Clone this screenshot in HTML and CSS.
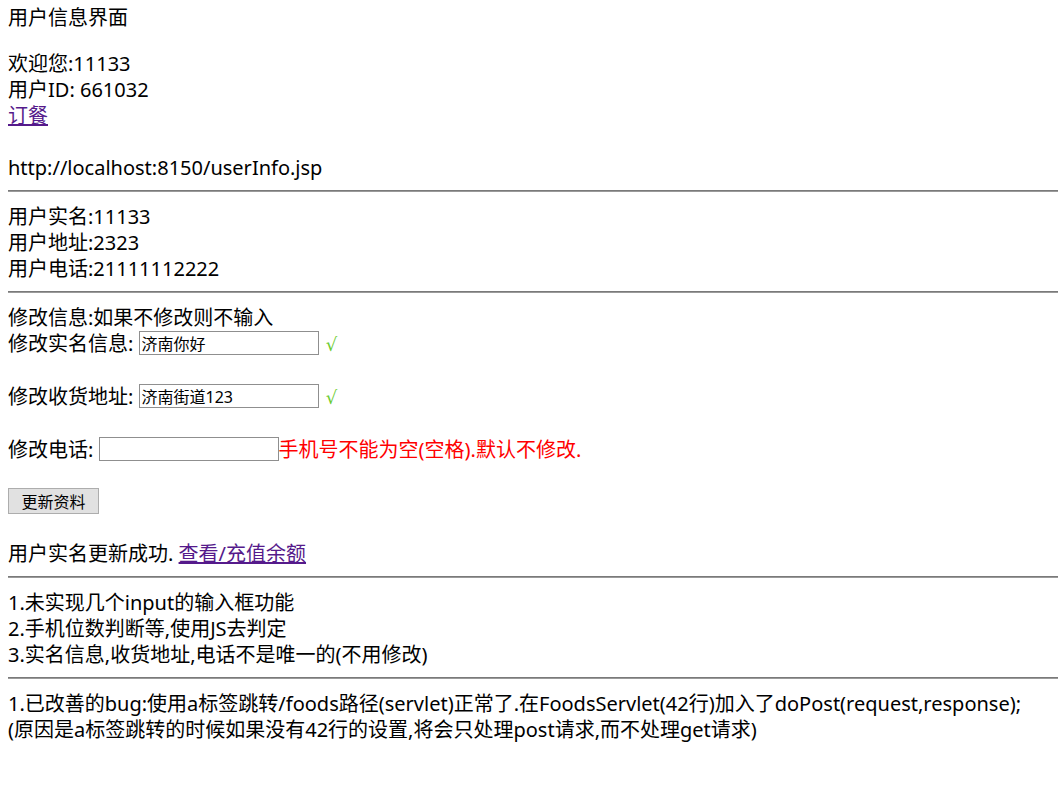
FILE: index.html
```html
<!DOCTYPE html>
<html>

<head>
  <meta charset="utf-8">
  <link rel="stylesheet" href="styles.css">
</head>

<body>
  <p class="title">用户信息界面</p>

  <div class="welcome">
    欢迎您:11133<br>
    用户ID: 661032<br>
    <a href="#">订餐</a><br>
    <br>
    http://localhost:8150/userInfo.jsp
  </div>
  <hr>

  <div class="info">
    用户实名:11133<br>
    用户地址:2323<br>
    用户电话:21111112222
  </div>
  <hr>

  <form class="edit-form">
    修改信息:如果不修改则不输入<br>
    修改实名信息: <input type="text" value="济南你好"> <span class="ok">√</span><br>
    <br>
    修改收货地址: <input type="text" value="济南街道123"> <span class="ok">√</span><br>
    <br>
    修改电话: <input type="text" class="phone"><span class="err">手机号不能为空(空格).默认不修改.</span><br>
    <br>
    <button type="button">更新资料</button><br>
    <br>
    用户实名更新成功. <a href="#">查看/充值余额</a>
  </form>
  <hr>

  <div class="notes">
    1.未实现几个input的输入框功能<br>
    2.手机位数判断等,使用JS去判定<br>
    3.实名信息,收货地址,电话不是唯一的(不用修改)
  </div>
  <hr>

  <div class="notes">
    1.已改善的bug:使用a标签跳转/foods路径(servlet)正常了.在FoodsServlet(42行)加入了doPost(request,response);<br>
    (原因是a标签跳转的时候如果没有42行的设置,将会只处理post请求,而不处理get请求)
  </div>
</body>

</html>
```

FILE: styles.css
```css
body {
  margin: 5px 0 8px 8px;
  font-family: "Noto Sans", "Noto Sans CJK SC", sans-serif;
  font-size: 20px;
  line-height: 26px;
  color: black;
  background: white;
}

.title {
  margin: 0 0 20px 0;
}

a {
  color: #551a8b;
}

hr {
  margin: 9px 0 12px 0;
  border: none;
  border-top: 1px solid #7a7a7a;
  border-bottom: 1px solid #9a9a9a;
}

.edit-form {
  margin: 0;
}

.edit-form input {
  width: 180px;
  height: 24px;
  box-sizing: border-box;
  margin: -6px 0 0 0;
  border: 1px solid #8f8f8f;
  padding: 1px 2px;
  font-family: "Noto Sans", "Noto Sans CJK SC", sans-serif;
  font-size: 16px;
  vertical-align: middle;
}

.ok {
  margin-left: 2px;
  color: #6ccc33;
  font-family: "DejaVu Sans", sans-serif;
  font-size: 18px;
}

.err {
  color: red;
}

.edit-form button {
  width: 91px;
  height: 26px;
  margin: -6px 0 0 0;
  padding: 0;
  border: 1px solid #adadad;
  background: #e1e1e1;
  font-family: "Noto Sans", "Noto Sans CJK SC", sans-serif;
  font-size: 16px;
  color: black;
  vertical-align: middle;
}
```
